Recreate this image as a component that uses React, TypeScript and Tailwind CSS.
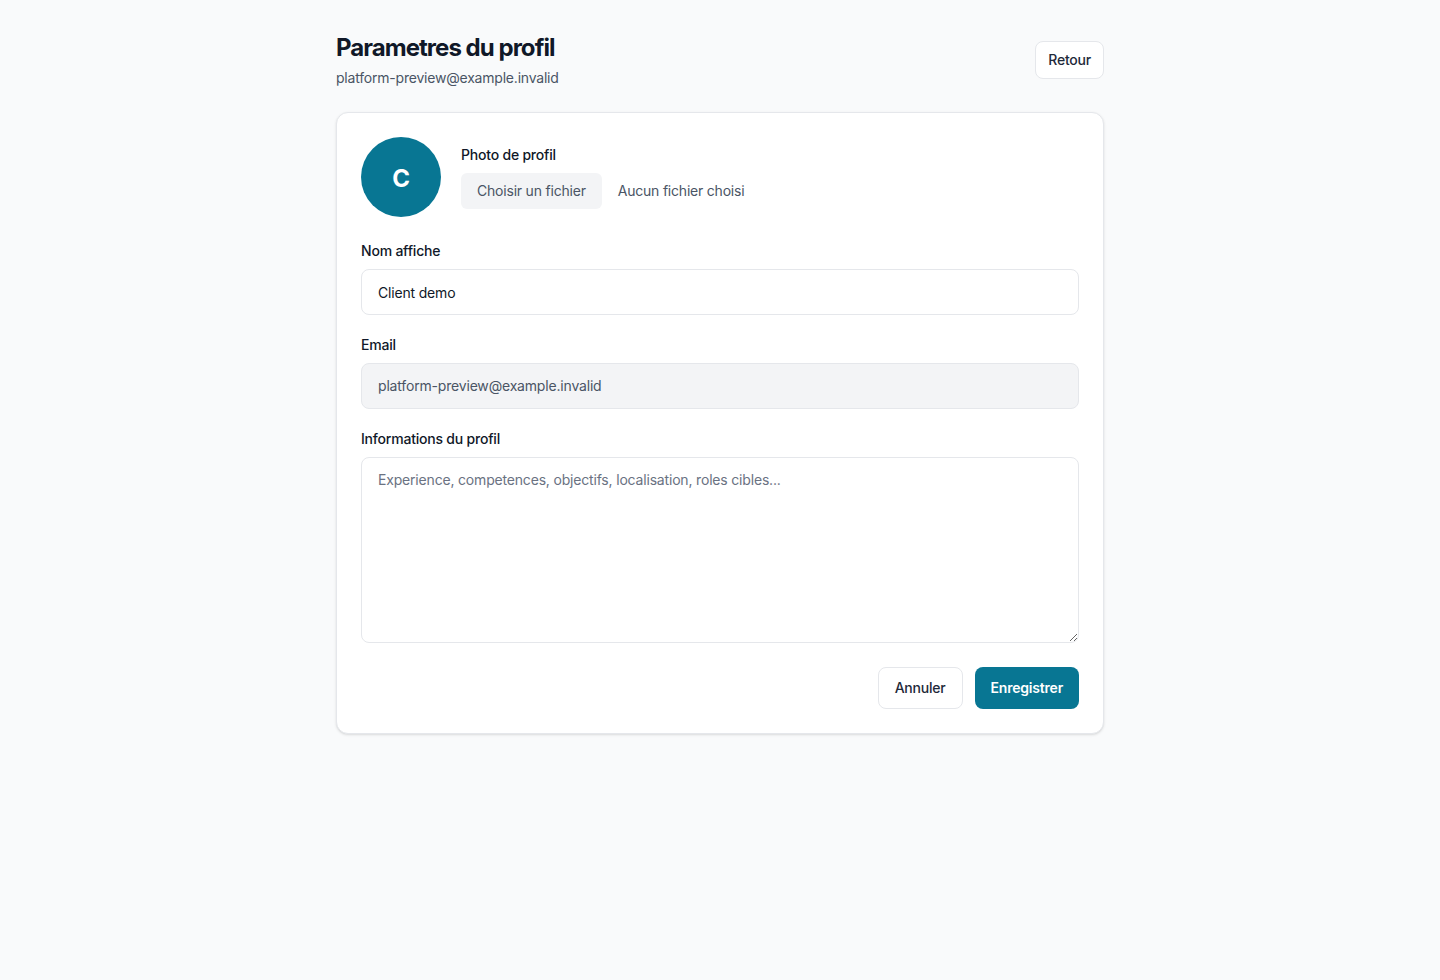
import React from "react";

export default function App() {
  return (
    <div
      className="min-h-screen bg-gray-50 tracking-[-0.013em] text-gray-900"
      style={{ fontFamily: "Inter, 'Noto Sans', sans-serif" }}
    >
      <div className="mx-auto w-[768px] pt-8 pb-10">
        <div className="mb-6 flex items-start justify-between">
          <div>
            <h1 className="text-2xl font-bold leading-8 tracking-[-0.04em] text-gray-900">
              Parametres du profil
            </h1>
            <p className="mt-1 text-sm leading-5 text-gray-600">platform-preview@example.invalid</p>
          </div>
          <button className="mt-[9px] h-[38px] rounded-lg border border-gray-200 bg-white px-3 text-sm font-medium text-gray-800">
            Retour
          </button>
        </div>

        <div className="rounded-xl border border-gray-200 bg-white p-6 shadow-sm">
          <div className="flex items-center gap-5">
            <div className="flex h-20 w-20 items-center justify-center rounded-full bg-[#087693] pt-[3px] text-2xl font-bold text-white">
              C
            </div>
            <div>
              <div className="text-sm font-medium leading-5 text-gray-900">Photo de profil</div>
              <div className="mt-2 flex items-center gap-4">
                <span className="flex h-9 items-center rounded-md bg-gray-100 px-4 text-sm text-gray-600">
                  Choisir un fichier
                </span>
                <span className="text-sm text-gray-600">Aucun fichier choisi</span>
              </div>
            </div>
          </div>

          <div className="mt-6">
            <label className="mb-2 block text-sm font-medium leading-5 text-gray-900">Nom affiche</label>
            <input
              className="block h-[46px] w-full rounded-lg border border-gray-200 bg-white px-4 text-sm tracking-[-0.013em] text-gray-900 outline-none"
              defaultValue="Client demo"
            />
          </div>

          <div className="mt-5">
            <label className="mb-2 block text-sm font-medium leading-5 text-gray-900">Email</label>
            <input
              className="block h-[46px] w-full rounded-lg border border-gray-200 bg-gray-100 px-4 pb-[1px] text-sm tracking-[-0.013em] text-gray-600 outline-none"
              defaultValue="platform-preview@example.invalid"
              disabled
            />
          </div>

          <div className="mt-5">
            <label className="mb-2 block text-sm font-medium leading-5 text-gray-900">
              Informations du profil
            </label>
            <textarea
              rows={8}
              className="block h-[186px] w-full rounded-lg border border-gray-200 bg-white px-4 py-3 text-sm leading-5 tracking-[-0.013em] text-gray-900 outline-none placeholder:text-gray-500"
              placeholder="Experience, competences, objectifs, localisation, roles cibles..."
            />
          </div>

          <div className="mt-6 flex justify-end gap-3">
            <button className="h-[42px] rounded-lg border border-gray-200 bg-white px-4 text-sm font-medium text-gray-800">
              Annuler
            </button>
            <button className="h-[42px] rounded-lg bg-[#087693] px-4 text-sm font-semibold text-white">
              Enregistrer
            </button>
          </div>
        </div>
      </div>
    </div>
  );
}
